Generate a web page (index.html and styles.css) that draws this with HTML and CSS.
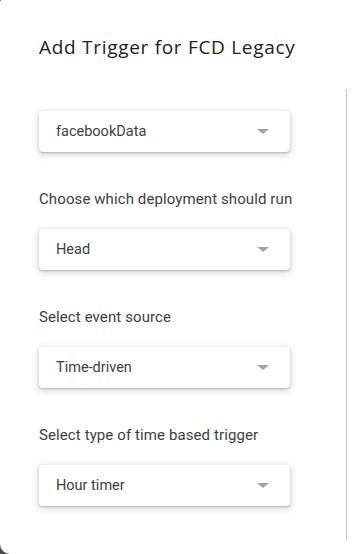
FILE: index.html
```html
<!DOCTYPE html>
<html>
<head>
<meta charset="utf-8">
<link rel="stylesheet" href="styles.css">
</head>
<body>
<div class="dialog">
  <h1 class="title">Add Trigger for FCD Legacy</h1>
  <div class="content">
    <div class="select"><span class="value">facebookData</span><span class="arrow"></span></div>
    <div class="label">Choose which deployment should run</div>
    <div class="select"><span class="value">Head</span><span class="arrow"></span></div>
    <div class="label">Select event source</div>
    <div class="select"><span class="value">Time-driven</span><span class="arrow"></span></div>
    <div class="label">Select type of time based trigger</div>
    <div class="select"><span class="value">Hour timer</span><span class="arrow"></span></div>
  </div>
</div>
</body>
</html>
```

FILE: styles.css
```css
html, body {
  margin: 0;
  padding: 0;
  background: #4a4a4a;
}
.dialog {
  width: 352px;
  height: 554px;
  background: #fff;
  border-radius: 2px 0 0 10px;
  box-sizing: border-box;
  overflow: hidden;
  font-family: Roboto, "Liberation Sans", sans-serif;
}
.title {
  margin: 0;
  padding: 35px 0 0 39px;
  height: 89px;
  box-sizing: border-box;
  font-family: "Open Sans", Roboto, sans-serif;
  font-size: 19px;
  line-height: 24px;
  font-weight: 500;
  color: #202124;
  letter-spacing: 0.7px;
}
.content {
  width: 347px;
  height: 451px;
  box-sizing: border-box;
  border-right: 1px solid #c4c4c4;
  padding: 22px 0 0 39px;
  display: flex;
  flex-direction: column;
  align-items: flex-start;
}
.select {
  width: 251px;
  height: 41px;
  box-sizing: border-box;
  border-radius: 4px;
  background: #fff;
  box-shadow: 0 1px 2px rgba(60,64,67,0.3), 0 2px 6px 2px rgba(60,64,67,0.15);
  display: flex;
  align-items: center;
  padding: 0 21px 0 17px;
}
.value {
  flex: 1;
  font-size: 14.5px;
  color: #3c4043;
}
.arrow {
  width: 0;
  height: 0;
  border-left: 6px solid transparent;
  border-right: 6px solid transparent;
  border-top: 5px solid #a3a3a3;
}
.label {
  margin: 37px 0 20px;
  font-size: 15px;
  line-height: 20px;
  letter-spacing: 0.1px;
  color: #3c4043;
}
```
